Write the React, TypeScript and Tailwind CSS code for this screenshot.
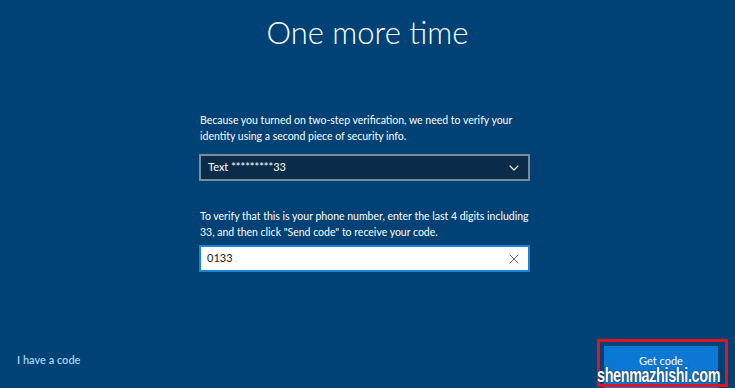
import { X, ChevronDown } from "lucide-react";

const App = () => {
  return (
    <div
      className="relative h-[388px] w-[735px] overflow-hidden bg-[#004275] text-white"
      style={{ fontFamily: 'Lato, "Noto Sans", sans-serif' }}
    >
      <h1 className="pt-[10px] text-center text-[31px] font-light leading-[44px]">
        One more time
      </h1>

      <div className="ml-[199px] mt-[58px] w-[331px]">
        <p className="pl-[1px] text-[10.5px] leading-[16px]">
          Because you turned on two-step verification, we need to verify your
          identity using a second piece of security info.
        </p>
        <div className="mt-[10px] flex h-[27px] items-center justify-between border-2 border-[#7d8c9b] bg-[#0b2b4b] pl-[7px] pr-[6px]">
          <span className="text-[11px]">Text *********33</span>
          <ChevronDown className="h-[16px] w-[16px]" strokeWidth={1.6} />
        </div>

        <p className="mt-[27px] w-[345px] pl-[1px] text-[10.5px] leading-[16px]">
          To verify that this is your phone number, enter the last 4 digits
          including 33, and then click "Send code" to receive your code.
        </p>
        <div className="mt-[5px] flex h-[27px] items-center justify-between border-2 border-[#1d83d6] bg-white pl-[6px] pr-[6px] text-[#1a1a1a]">
          <span className="text-[11px]">0133</span>
          <X className="h-[16px] w-[16px] text-[#555]" strokeWidth={1.3} />
        </div>
      </div>

      <div className="absolute bottom-0 left-0 right-0 flex items-end justify-between">
        <span className="mb-[20px] ml-[17px] text-[11px] font-semibold text-[#a6d3f7]">
          I have a code
        </span>
        <button className="mr-[17px] h-[42px] w-[114px] bg-[#0a78d4] pb-[12px] text-[11px] text-white">
          Get code
        </button>
      </div>

      {/* watermark + red frame, overlaid on the button */}
      <div className="absolute left-[597px] top-[339px] h-[48px] w-[131px] border-[3px] border-[#e0141e]" />
      <div
        className="absolute left-[597px] top-[360px] origin-left scale-x-[0.72] whitespace-nowrap text-[20px] font-bold tracking-[-0.5px] text-white"
        style={{
          fontFamily: '"Liberation Sans", sans-serif',
          textShadow: "0 0 2px #1a2a3a, 0 0 1px #1a2a3a",
        }}
      >
        shenmazhishi.com
      </div>
    </div>
  );
};

export default App;
